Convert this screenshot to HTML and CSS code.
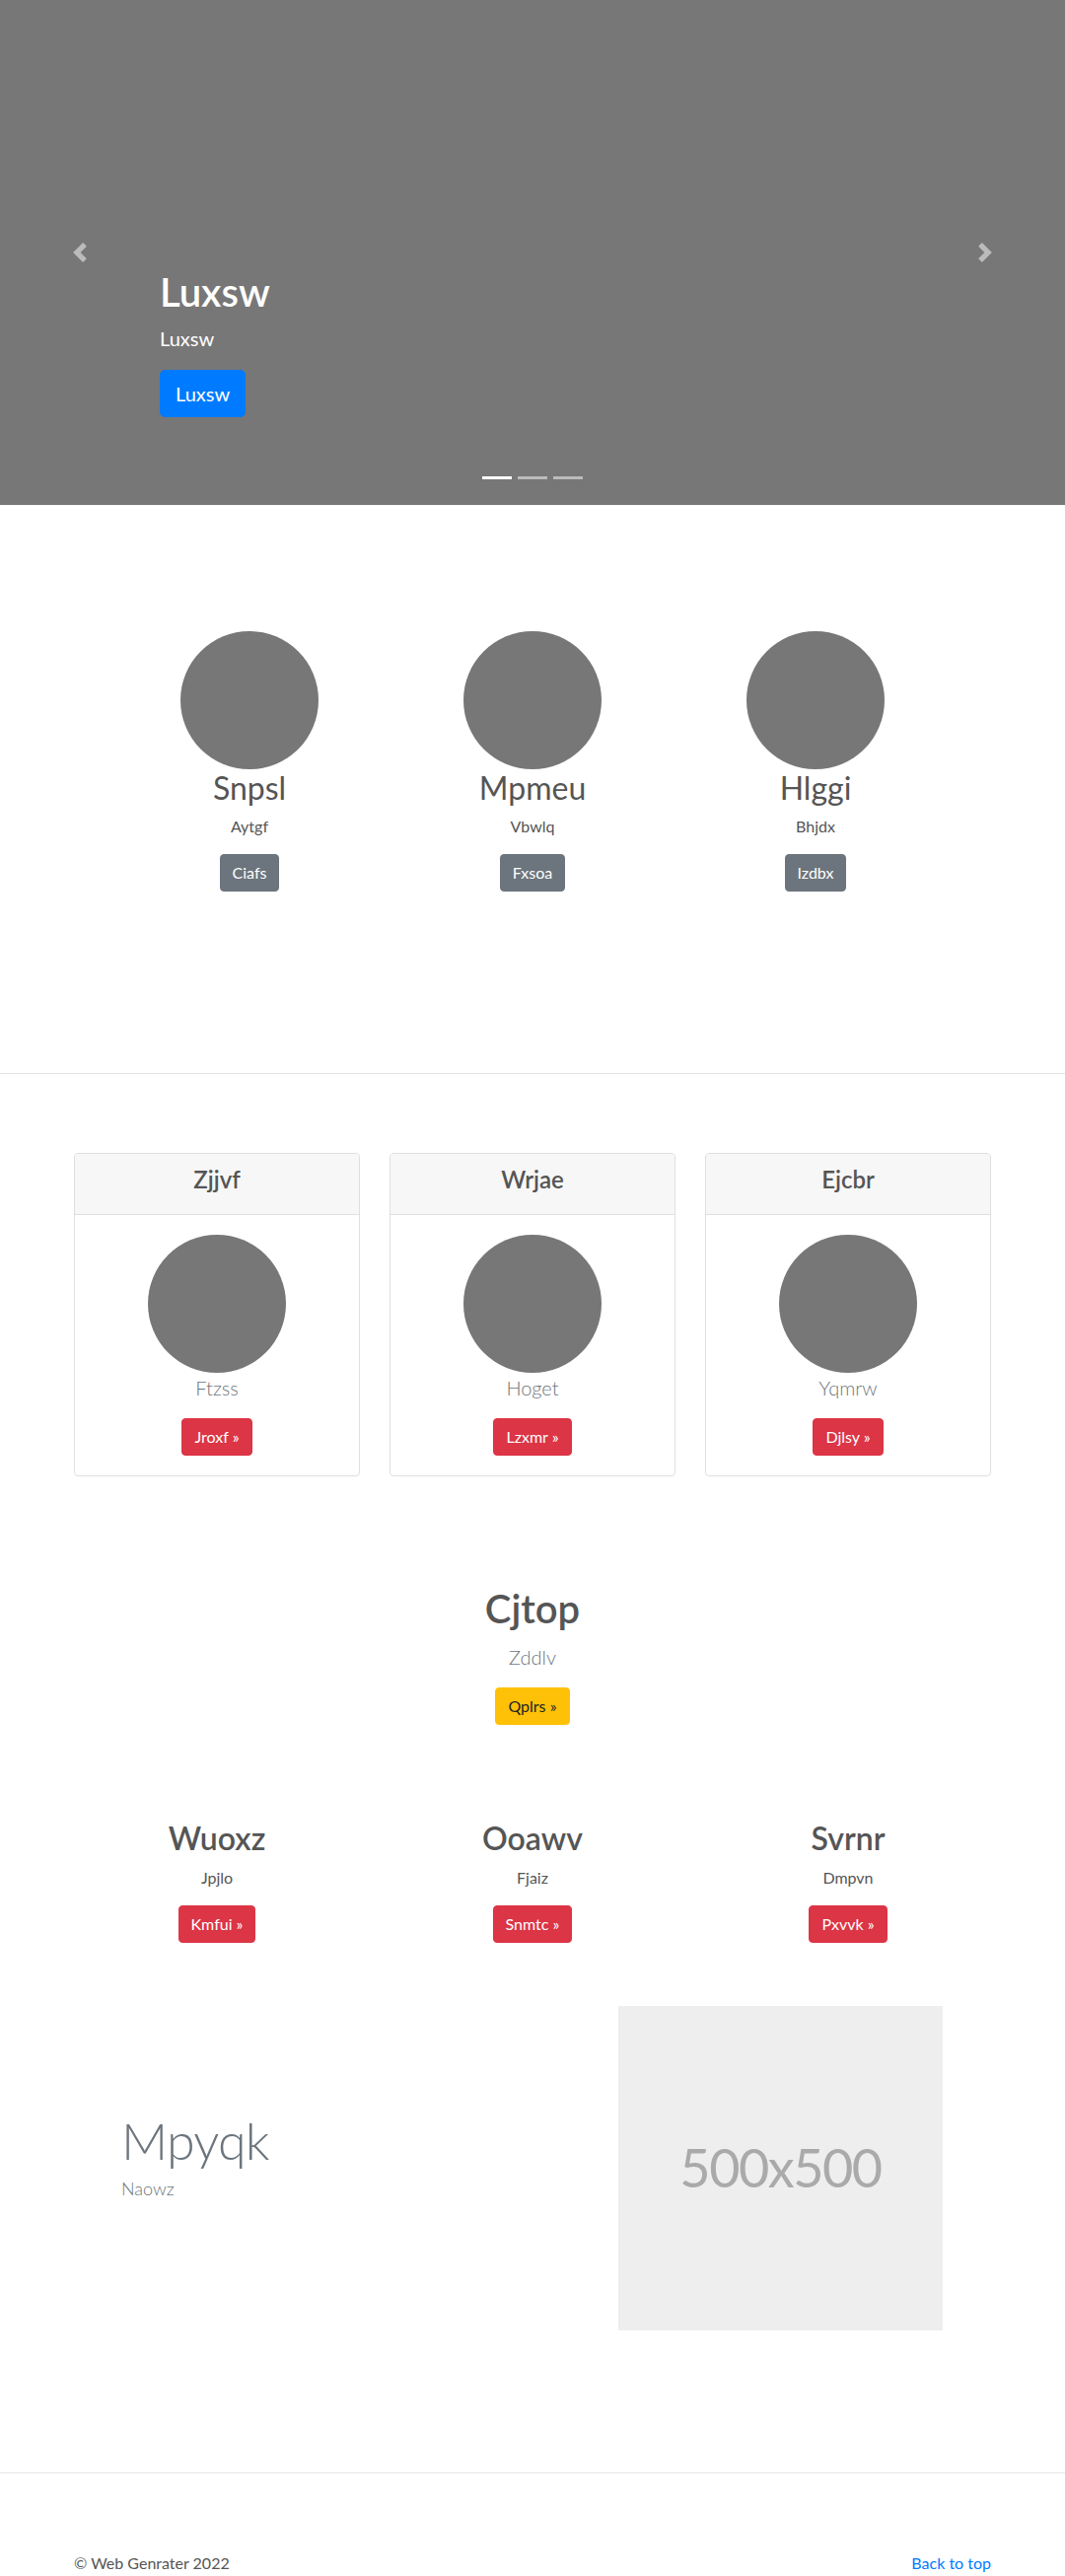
FILE: index.html
```html
<!DOCTYPE html>
<html lang="en">
<head>
<meta charset="utf-8">
<title>Page</title>
<link rel="stylesheet" href="styles.css">
</head>
<body>
<header class="hero">
  <a class="ctrl ctrl-prev" href="#"><svg class="ctrl-icon" viewBox="0 0 8 8" width="20" height="20"><path fill="#fff" d="M5.25 0l-4 4 4 4 1.5-1.5L4.25 4l2.5-2.5L5.25 0z"/></svg></a>
  <div class="caption">
    <h1 class="hero-title">Luxsw</h1>
    <p class="hero-sub">Luxsw</p>
    <a class="btn btn-lg btn-primary" href="#">Luxsw</a>
  </div>
  <a class="ctrl ctrl-next" href="#"><svg class="ctrl-icon" viewBox="0 0 8 8" width="20" height="20"><path fill="#fff" d="M2.75 0l-1.5 1.5L3.75 4l-2.5 2.5L2.75 8l4-4-4-4z"/></svg></a>
  <ol class="indicators"><li class="ind active"></li><li class="ind"></li><li class="ind"></li></ol>
</header>

<section class="marketing">
  <div class="m-row">
    <div class="m-col">
      <div class="circle"></div>
      <h2 class="m-title">Snpsl</h2>
      <p class="m-text">Aytgf</p>
      <a class="btn btn-secondary" href="#">Ciafs</a>
    </div>
    <div class="m-col">
      <div class="circle"></div>
      <h2 class="m-title">Mpmeu</h2>
      <p class="m-text">Vbwlq</p>
      <a class="btn btn-secondary" href="#">Fxsoa</a>
    </div>
    <div class="m-col">
      <div class="circle"></div>
      <h2 class="m-title">Hlggi</h2>
      <p class="m-text">Bhjdx</p>
      <a class="btn btn-secondary" href="#">Izdbx</a>
    </div>
  </div>
</section>

<hr class="divider">

<section class="cards">
  <div class="container row">
    <div class="col">
      <div class="card">
        <div class="card-header"><h4 class="card-title">Zjjvf</h4></div>
        <div class="card-body">
          <div class="circle"></div>
          <p class="lead muted">Ftzss</p>
          <a class="btn btn-danger" href="#">Jroxf »</a>
        </div>
      </div>
    </div>
    <div class="col">
      <div class="card">
        <div class="card-header"><h4 class="card-title">Wrjae</h4></div>
        <div class="card-body">
          <div class="circle"></div>
          <p class="lead muted">Hoget</p>
          <a class="btn btn-danger" href="#">Lzxmr »</a>
        </div>
      </div>
    </div>
    <div class="col">
      <div class="card">
        <div class="card-header"><h4 class="card-title">Ejcbr</h4></div>
        <div class="card-body">
          <div class="circle"></div>
          <p class="lead muted">Yqmrw</p>
          <a class="btn btn-danger" href="#">Djlsy »</a>
        </div>
      </div>
    </div>
  </div>
</section>

<section class="cta">
  <h2 class="cta-title">Cjtop</h2>
  <p class="lead muted">Zddlv</p>
  <a class="btn btn-warning" href="#">Qplrs »</a>
</section>

<section class="features">
  <div class="container row">
    <div class="col center">
      <h2 class="f-title">Wuoxz</h2>
      <p class="m-text">Jpjlo</p>
      <a class="btn btn-danger" href="#">Kmfui »</a>
    </div>
    <div class="col center">
      <h2 class="f-title">Ooawv</h2>
      <p class="m-text">Fjaiz</p>
      <a class="btn btn-danger" href="#">Snmtc »</a>
    </div>
    <div class="col center">
      <h2 class="f-title">Svrnr</h2>
      <p class="m-text">Dmpvn</p>
      <a class="btn btn-danger" href="#">Pxvvk »</a>
    </div>
  </div>
</section>

<section class="featurette">
  <div class="container feat-row">
    <div class="feat-text">
      <h2 class="feat-heading">Mpyqk</h2>
      <p class="feat-sub">Naowz</p>
    </div>
    <div class="placeholder"><span class="ph-text">500x500</span></div>
  </div>
</section>

<hr class="divider divider-bottom">

<footer class="footer">
  <div class="container foot-row">
    <p class="foot-text">© Web Genrater 2022</p>
    <a class="foot-link" href="#">Back to top</a>
  </div>
</footer>
</body>
</html>
```

FILE: styles.css
```css
* { box-sizing: border-box; }
html, body { margin: 0; padding: 0; }
body {
  font-family: Lato, "Open Sans", "Noto Sans", sans-serif;
  font-size: 16px;
  line-height: 1.5;
  color: #555;
  background: #fff;
}
h1, h2, h4, p { margin: 0; }
a { text-decoration: none; }

.container { width: 960px; margin: 0 auto; }
.row { display: flex; }
.col { width: 320px; padding: 0 15px; }
.center { text-align: center; }

/* buttons */
.btn {
  display: inline-block;
  font-size: 16px;
  line-height: 24px;
  padding: 6px 12px;
  border: 1px solid transparent;
  border-radius: 4px;
  color: #fff;
}
.btn-lg { font-size: 20px; line-height: 30px; padding: 8px 15px; border-radius: 5px; }
.btn-primary { background: #007bff; border-color: #007bff; }
.btn-secondary { background: #6c757d; border-color: #6c757d; }
.btn-danger { background: #dc3545; border-color: #dc3545; }
.btn-warning { background: #ffc107; border-color: #ffc107; color: #212529; }

/* hero */
.hero {
  position: relative;
  height: 512px;
  background: #777;
  padding: 272px 0 0 162px;
}
.hero-title { font-size: 40px; line-height: 48px; font-weight: 600; color: #fff; margin-bottom: 8px; }
.hero-sub { font-size: 20px; line-height: 30px; color: #fff; margin-bottom: 17px; }
.ctrl {
  position: absolute;
  top: 0; bottom: 0;
  width: 162px;
  display: flex;
  align-items: center;
  justify-content: center;
  opacity: .5;
}
.ctrl-prev { left: 0; }
.ctrl-next { right: 0; }
.ctrl-icon { display: block; }
.indicators {
  position: absolute;
  left: 0; right: 0; top: 483px;
  margin: 0; padding: 0;
  list-style: none;
  display: flex;
  justify-content: center;
  gap: 6px;
}
.ind { width: 30px; height: 3px; background: rgba(255,255,255,.5); }
.ind.active { background: #fff; }

/* marketing */
.marketing { padding: 128px 0 184px; }
.m-row { display: flex; justify-content: center; }
.m-col { width: 287px; text-align: center; }
.circle { width: 140px; height: 140px; border-radius: 50%; background: #777; margin: 0 auto; }
.m-title { font-size: 32px; line-height: 38.4px; font-weight: 400; margin-bottom: 8px; }
.m-text { margin-bottom: 16px; }

.divider { margin: 0; border: 0; border-top: 1px solid #e5e5e5; height: 0; }

/* cards */
.cards { padding-top: 80px; }
.card { border: 1px solid #dfdfdf; border-radius: 4px; overflow: hidden; }
.card-header { background: #f7f7f7; border-bottom: 1px solid #dfdfdf; padding: 12px 20px; text-align: center; }
.card-title { font-size: 24px; line-height: 28.8px; font-weight: 600; margin-bottom: 8px; }
.card-body { padding: 20px; text-align: center; }
.lead { font-size: 20px; line-height: 30px; font-weight: 300; margin-bottom: 16px; }
.muted { color: #6c757d; }

/* cta */
.cta { padding-top: 110px; text-align: center; }
.cta-title { font-size: 40px; line-height: 48px; font-weight: 600; margin-bottom: 10px; }

/* features */
.features { padding-top: 96px; }
.f-title { font-size: 32px; line-height: 38.4px; font-weight: 600; margin-bottom: 8px; }

/* featurette */
.featurette { padding: 64px 0 144px; }
.feat-row { display: flex; padding: 0 64px 0 63px; }
.feat-text { flex: 1; padding-top: 110px; }
.feat-heading { font-size: 52px; line-height: 52px; font-weight: 300; letter-spacing: -0.8px; color: #6c757d; margin-bottom: 10px; }
.feat-sub { font-size: 18px; line-height: 27px; font-weight: 300; color: #6c757d; }
.placeholder {
  width: 329px; height: 329px;
  background: #eee;
  display: flex; align-items: center; justify-content: center;
}
.ph-text { font-size: 54px; line-height: 1; color: #aaa; letter-spacing: -1.5px; }

/* footer */
.footer { padding-top: 79px; }
.foot-row { display: flex; justify-content: space-between; padding: 0 15px; }
.foot-link { color: #007bff; }
```
